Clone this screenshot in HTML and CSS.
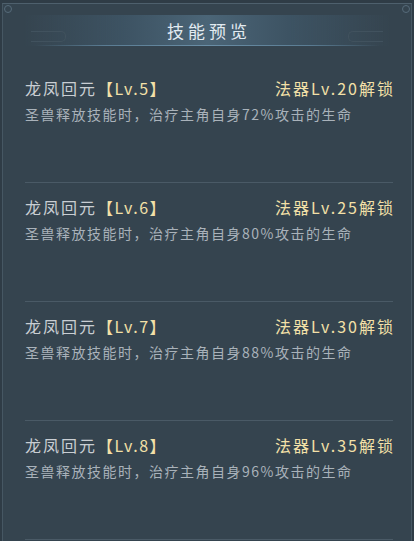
FILE: index.html
```html
<!DOCTYPE html>
<html lang="zh-CN">
<head>
    <meta charset="UTF-8">
    <meta name="viewport" content="width=device-width, initial-scale=1.0">
    <title>技能预览</title>
    <link rel="stylesheet" href="styles.css">
</head>
<body>
    <div class="panel">
        <div class="header">
            <span class="header-title">技能预览</span>
        </div>
        <div class="skill-list">
            <div class="skill-row">
                <div class="skill-top">
                    <span class="skill-name">龙凤回元<span class="lv">【Lv.5】</span></span>
                    <span class="unlock">法器Lv.20解锁</span>
                </div>
                <div class="skill-desc">圣兽释放技能时，治疗主角自身72%攻击的生命</div>
            </div>
            <div class="skill-row">
                <div class="skill-top">
                    <span class="skill-name">龙凤回元<span class="lv">【Lv.6】</span></span>
                    <span class="unlock">法器Lv.25解锁</span>
                </div>
                <div class="skill-desc">圣兽释放技能时，治疗主角自身80%攻击的生命</div>
            </div>
            <div class="skill-row">
                <div class="skill-top">
                    <span class="skill-name">龙凤回元<span class="lv">【Lv.7】</span></span>
                    <span class="unlock">法器Lv.30解锁</span>
                </div>
                <div class="skill-desc">圣兽释放技能时，治疗主角自身88%攻击的生命</div>
            </div>
            <div class="skill-row">
                <div class="skill-top">
                    <span class="skill-name">龙凤回元<span class="lv">【Lv.8】</span></span>
                    <span class="unlock">法器Lv.35解锁</span>
                </div>
                <div class="skill-desc">圣兽释放技能时，治疗主角自身96%攻击的生命</div>
            </div>
        </div>
    </div>
</body>
</html>
```

FILE: styles.css
```css
body {
    margin: 0;
    background-color: #2f3c46;
    font-family: "Noto Sans CJK SC", "Noto Sans", sans-serif;
    height: 541px;
    overflow: hidden;
}

.panel {
    position: relative;
    margin: 3px 2px 0 2px;
    height: 538px;
    background-color: #35444f;
    border-top: 1px solid #4e606d;
    border-left: 1px solid #465763;
    border-right: 1px solid #465763;
    box-sizing: border-box;
}

.panel::before,
.panel::after {
    content: "";
    position: absolute;
    top: 1px;
    width: 6px;
    height: 6px;
    border: 1px solid #566b7a;
    border-radius: 50%;
}

.panel::before {
    left: 1px;
}

.panel::after {
    right: 1px;
}

.header {
    position: relative;
    margin-top: 11px;
    height: 30px;
    display: flex;
    justify-content: center;
    align-items: center;
    background: linear-gradient(90deg, rgba(75, 99, 117, 0) 5%, #3d5363 30%, #4b6577 50%, #3d5363 70%, rgba(75, 99, 117, 0) 95%);
    border-bottom: 1px solid transparent;
    border-image: linear-gradient(90deg, rgba(90, 124, 147, 0) 8%, #5a7c93 25%, #6a8ea6 50%, #5a7c93 75%, rgba(90, 124, 147, 0) 92%) 1;
}

.header::before,
.header::after {
    content: "";
    position: absolute;
    top: 16px;
    width: 34px;
    height: 9px;
    border: 1px solid #41525e;
}

.header::before {
    left: 28px;
    border-left: none;
    border-radius: 0 5px 5px 0;
}

.header::after {
    right: 28px;
    border-right: none;
    border-radius: 5px 0 0 5px;
}

.header-title {
    color: #e2ebf1;
    font-size: 17px;
    letter-spacing: 4px;
    margin-left: 4px;
}

.skill-list {
    margin-top: 18px;
    padding: 0 18px 0 22px;
}

.skill-row {
    padding: 14px 0 0 0;
    height: 104px;
    border-bottom: 1px solid #4a5a66;
}

.skill-top {
    display: flex;
    justify-content: space-between;
    align-items: center;
    height: 20px;
}

.skill-name {
    color: #c9ced3;
    font-size: 16px;
    letter-spacing: 2px;
}

.lv {
    color: #f3e0a8;
    letter-spacing: 1.5px;
}

.unlock {
    color: #f3e0a8;
    font-size: 16px;
    letter-spacing: 2px;
    margin-right: -2px;
}

.skill-desc {
    margin-top: 6px;
    color: #a9b2ba;
    font-size: 14px;
    line-height: 20px;
    letter-spacing: 1.5px;
}
```
